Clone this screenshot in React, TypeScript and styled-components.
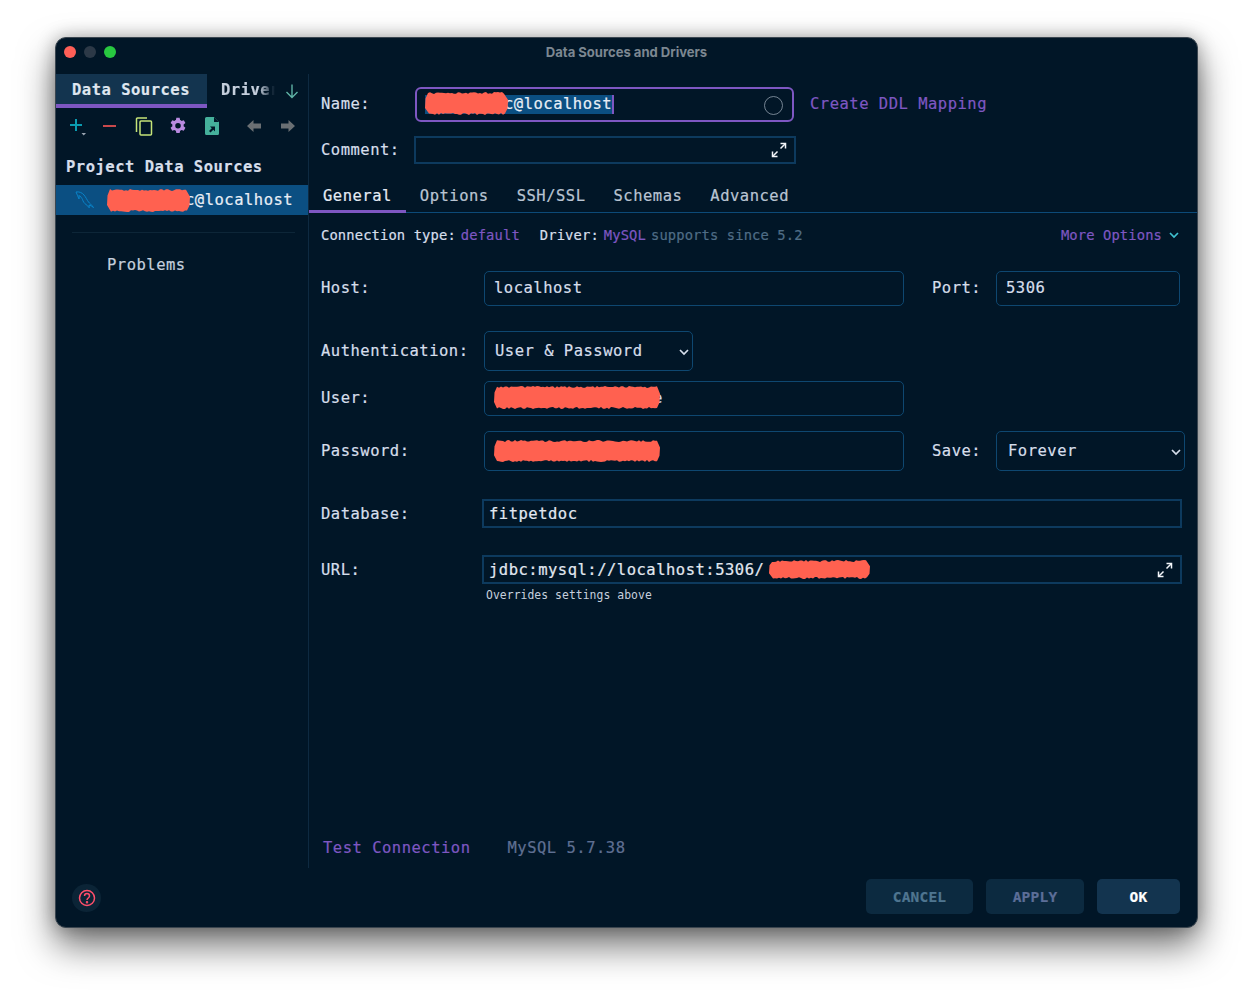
import React from "react";
import styled, { createGlobalStyle } from "styled-components";

const mono = `"DejaVu Sans Mono", "Liberation Mono", monospace`;

const Global = createGlobalStyle`
  html, body { margin: 0; padding: 0; background: #fff; }
  * { box-sizing: border-box; }
`;

const Page = styled.div`
  width: 1253px; height: 1001px; overflow: hidden;
  padding: 37px 0 0 55px;
  background: #fff;
  font-family: ${mono};
  font-size: 15.5px;
  letter-spacing: 0.5px;
  -webkit-text-stroke: 0.2px;
  color: #d6deeb;
`;
const Window = styled.div`
  width: 1143px; height: 891px;
  background: #011627;
  border: 1px solid #3b4650;
  border-radius: 11px;
  box-shadow: 0 18px 36px rgba(0,0,0,.55), 0 0 18px rgba(0,0,0,.28);
  display: flex; flex-direction: column;
  overflow: hidden;
`;
const TitleBar = styled.div`
  height: 36px; flex: none;
  display: grid; grid-template-columns: 1fr auto 1fr; align-items: center;
  padding: 0 0 8px 0;
`;
const Lights = styled.div`display: flex; gap: 8px; margin-left: 8px;`;
const Light = styled.span<{ $c: string }>`
  width: 12px; height: 12px; border-radius: 50%; background: ${p => p.$c};
`;
const Title = styled.div`
  font: 700 13.05px Inter, "Liberation Sans", sans-serif;
  letter-spacing: 0;
  -webkit-text-stroke: 0;
  margin-top: -1px;
  color: #7c8791;
`;
const Body = styled.div`display: flex; height: 794px; flex: none;`;
const Sidebar = styled.aside`
  width: 253px; flex: none; border-right: 1px solid #0e2a41;
  display: flex; flex-direction: column;
`;
const SideTabs = styled.div`display: flex; height: 34px; align-items: stretch;`;
const SideTab = styled.div`
  width: 151px; background: #13344f; border-bottom: 4px solid #7e57c2;
  padding: 7px 0 0 16px; font-weight: 700; color: #dfe6f0;
`;
const SideTabFaded = styled.div`
  width: 54px; margin-left: 14px; padding-top: 7px; overflow: hidden; white-space: nowrap;
  font-weight: 700; color: #c5cfdd;
  -webkit-mask-image: linear-gradient(90deg, #000 70%, transparent 100%);
  mask-image: linear-gradient(90deg, #000 70%, transparent 100%);
`;
const TabArrow = styled.div`margin-left: 9px; padding-top: 9px; line-height: 0;`;
const Toolbar = styled.div`
  display: flex; height: 36px; align-items: center; padding-left: 3px;
`;
const ToolBtn = styled.div<{ $gap?: number }>`
  width: 34px; height: 24px; display: flex; align-items: center; justify-content: center;
  margin-left: ${p => p.$gap ?? 0}px;
`;
const SideHeading = styled.div`
  font-weight: 700; padding-left: 10px; margin-top: 9px; height: 30px; line-height: 28px; color: #d6deeb;
`;
const SideRow = styled.div`
  height: 30px; margin-top: 2px; background: #0b4f82; display: flex; align-items: center;
  color: #e8eef6; white-space: nowrap;
`;
const RowIcon = styled.div`width: 51px; padding-left: 19px; line-height: 0;`;
const SideSep = styled.div`height: 1px; margin: 17px 13px 0 16px; background: #0d2638;`;
const Problems = styled.div`padding-left: 51px; margin-top: 22px; line-height: 20px; color: #c5cfdd;`;

const Main = styled.main`
  flex: 1; min-width: 0; display: flex; flex-direction: column;
`;
const Row = styled.div<{ $top: number; $h: number; $lift?: boolean }>`
  display: flex; align-items: center; margin-top: ${p => p.$top}px; height: ${p => p.$h}px;
  padding-left: 12px; flex: none; white-space: nowrap;
  ${p => (p.$lift ? "> * { padding-bottom: 2px; }" : "")}
`;
const Label = styled.div<{ $w: number; $ml?: number }>`
  width: ${p => p.$w}px; flex: none; margin-left: ${p => p.$ml ?? 0}px; color: #d6deeb;
`;
const NameField = styled.div`
  width: 379px; height: 100%; border: 2px solid #7e57c2; border-radius: 6px;
  display: flex; align-items: center; justify-content: space-between; padding: 0 9px 0 8px;
`;
const Selected = styled.span`
  height: 19px; padding-bottom: 2px; background: #0b4f82; border-right: 2px solid #7e57c2; display: inline-flex; align-items: center;
  color: #e8eef6;
`;
const Circle = styled.span`width: 19px; height: 19px; border-radius: 50%; border: 1px solid #9aa7b4; opacity: .75; margin-top: 2px;`;
const LinkText = styled.span<{ $ml?: number }>`color: #7e57c2; margin-left: ${p => p.$ml ?? 0}px;`;
const SquareField = styled.div<{ $w: number }>`
  width: ${p => p.$w}px; height: 100%; border: 2px solid #0d3a5e;
  display: flex; align-items: center; justify-content: space-between;
  padding: 0 7px 0 5px; color: #e2e8f1;
`;
const TabBar = styled.div`
  display: flex; height: 35px; margin-top: 14px; border-bottom: 1px solid #0c4a78; flex: none;
`;
const Tab = styled.div<{ $active?: boolean }>`
  padding: 9px 14px 0; height: 35px;
  color: ${p => (p.$active ? "#e4eaf3" : "#b9c4d2")};
  border-bottom: ${p => (p.$active ? "3px solid #7e57c2" : "none")};
  font-weight: ${p => (p.$active ? 500 : 400)};
`;
const InfoRow = styled.div`
  display: flex; align-items: center; height: 45px; margin-bottom: -1px; padding: 0 17px 2px 12px; font-size: 13.8px; letter-spacing: .12px;
  white-space: nowrap; flex: none;
`;
const InfoLabel = styled.span<{ $ml?: number }>`margin-left: ${p => p.$ml ?? 0}px; margin-right: 5px; color: #d6deeb;`;
const Dim = styled.span`color: #4f6d86; margin-left: 5px;`;
const MoreLink = styled.span`margin-left: auto; color: #7e57c2; display: inline-flex; align-items: center; gap: 6px;`;
const Field = styled.div<{ $w: number; $pl?: number }>`
  width: ${p => p.$w}px; height: 100%; flex: none; border: 1px solid #0e4770; border-radius: 5px;
  padding-left: ${p => p.$pl ?? 9}px; display: flex; align-items: center; color: #d6deeb;
`;
const SelectBox = styled(Field)`
  justify-content: space-between; padding-right: 2px; padding-left: ${p => p.$pl ?? 10}px;
  svg { margin-top: 2px; }
`;
const Ghost = styled.span`margin-left: -7px; color: #d6deeb;`;
const WideField = styled.div`
  width: 700px; height: 100%; margin-left: -2px; border: 2px solid #0d3a5e; padding: 0 7px 0 5px;
  display: flex; align-items: center; justify-content: space-between; color: #e2e8f1;
`;
const UrlText = styled.span`display: inline-flex; align-items: center;`;
const Hint = styled.div`
  padding-left: 177px; margin-top: 2px; height: 18px; line-height: 18px;
  font-size: 11.4px; letter-spacing: .05px; color: #c5cfdd; flex: none; -webkit-text-stroke: 0;
`;
const Status = styled.div`
  margin-top: auto; padding: 0 0 9px 14px; display: flex; height: 32px; align-items: center; flex: none;
`;
const Version = styled.span`margin-left: 37px; color: #5f6f92;`;
const Footer = styled.footer`
  flex: 1; display: flex; align-items: flex-start; padding: 11px 17px 0 16px;
`;
const Help = styled.div`
  width: 29px; height: 28px; margin-top: 5px; border-radius: 50%; background: #0b2436;
  display: flex; align-items: center; justify-content: center; line-height: 0;
`;
const Buttons = styled.div`margin-left: auto; display: flex; gap: 13px;`;
const Btn = styled.div<{ $w: number; $c: string; $bg: string }>`
  width: ${p => p.$w}px; height: 35px; border-radius: 5px; background: ${p => p.$bg}; color: ${p => p.$c};
  display: flex; align-items: center; justify-content: center; font-weight: 700; font-size: 14.5px; letter-spacing: .2px;
`;
const BlobSvg = styled.svg`display: block; flex: none; position: relative; z-index: 1;`;
const ScribbleWrap = styled.span<{ $mr: number; $ml: number }>`
  display: inline-flex; align-items: center; height: 0; overflow: visible;
  margin-right: ${p => p.$mr}px; margin-left: ${p => p.$ml}px;
`;

function Scribble({ w, h, seed = 3, mr = 0, ml = 0 }: { w: number; h: number; seed?: number; mr?: number; ml?: number }) {
  const d = React.useMemo(() => {
    let s = seed * 9973;
    const r = () => { s = (s * 16807) % 2147483647; return (s % 1000) / 1000; };
    const pts: string[] = [];
    for (let x = 3; x <= w - 3; x += 2) pts.push(`${x},${1 + r() * 2}`);
    pts.push(`${w},${h * 0.35}`, `${w - 0.5},${h * 0.7}`);
    for (let x = w - 3; x >= 3; x -= 2) pts.push(`${x},${h - 1 - r() * 2}`);
    pts.push(`0,${h * 0.68}`, `0.5,${h * 0.3}`);
    return `M${pts.join("L")}Z`;
  }, [w, h, seed]);
  return (
    <ScribbleWrap $mr={mr} $ml={ml}>
      <BlobSvg width={w} height={h} viewBox={`0 0 ${w} ${h}`}><path d={d} fill="#ff6150" /></BlobSvg>
    </ScribbleWrap>
  );
}

const Expand = () => (
  <svg width="16" height="16" viewBox="0 0 16 16" fill="none" stroke="#f2f5f9" strokeWidth="1.5">
    <path d="M9.5 6.5 14 2M1.8 14.2 6.5 9.5" />
    <path d="M9.5 1.6h5v5" fill="none" />
    <path d="M1.5 9.5v5h5" fill="none" />
  </svg>
);
const Chevron = ({ c = "#d6deeb", s = 12 }: { c?: string; s?: number }) => (
  <svg width={s} height={s} viewBox="0 0 12 12" fill="none" stroke={c} strokeWidth="1.7"><path d="M2 4l4 4 4-4" /></svg>
);

const Dolphin = () => (
  <svg width="19" height="18" viewBox="0 0 19 18" fill="none" stroke="#0a84c9" strokeWidth="1">
    <path d="M1 1c3-.5 6 .5 8 3 2 2.400 3 5 4.500 7 1 1.300 3 2.600 5 5.500-1.500-1.300-3-2-4.500-2.500.3 1 .4 1.800.2 2.800-1-1.500-2-2.500-3.200-3.300-2-1.300-2.800-3-3.500-5C6.800 7 5.500 5 3.800 4.500 4.500 6 4.200 7 4 8 3.300 6 2 3.500 1 1Z" />
  </svg>
);

export default function App() {
  return (
    <Page>
      <Global />
      <Window>
        <TitleBar>
          <Lights>
            <Light $c="#ff5f57" />
            <Light $c="#2c3947" />
            <Light $c="#28c840" />
          </Lights>
          <Title>Data Sources and Drivers</Title>
        </TitleBar>
        <Body>
          <Sidebar>
            <SideTabs>
              <SideTab>Data Sources</SideTab>
              <SideTabFaded>Drivers</SideTabFaded>
              <TabArrow>
                <svg width="16" height="16" viewBox="0 0 16 16" fill="none" stroke="#5fb3a5" strokeWidth="1.4">
                  <path d="M8 1.500v13M2.500 9 8 14.500 13.500 9" />
                </svg>
              </TabArrow>
            </SideTabs>
            <Toolbar>
              <ToolBtn>
                <svg width="22" height="22" viewBox="0 0 22 22">
                  <path d="M11 4v12M5 10h12" stroke="#0a9bb0" strokeWidth="2" fill="none" />
                  <path d="M16.500 18h4.500l-2.250 2.500z" fill="#9aa5b1" />
                </svg>
              </ToolBtn>
              <ToolBtn>
                <svg width="14" height="4" viewBox="0 0 14 4"><rect y="1" width="13" height="2" fill="#c9494c" /></svg>
              </ToolBtn>
              <ToolBtn>
                <svg width="18" height="20" viewBox="0 0 18 20" fill="none" stroke="#c5e478" strokeWidth="1.500">
                  <rect x="5" y="5" width="11.500" height="14" rx="1" />
                  <path d="M12 2H2.500a1 1 0 0 0-1 1v13" />
                </svg>
              </ToolBtn>
              <ToolBtn>
                <svg width="18" height="18" viewBox="0 0 24 24" fill="#b98ae0">
                  <path fillRule="evenodd" d="M14.200 1h-4.400l-.6 3.100a8 8 0 0 0-1.900 1.100L4.300 4.200 2.100 8l2.400 2.100a8 8 0 0 0 0 2.200l-2.400 2.100 2.200 3.800 3 -1a8 8 0 0 0 1.900 1.100l.6 3.100h4.400l.6-3.100a8 8 0 0 0 1.900-1.100l3 1 2.200-3.800-2.400-2.100a8 8 0 0 0 0-2.200L21.900 8l-2.200-3.800-3 1a8 8 0 0 0-1.900-1.100zM12 8a3.700 3.700 0 1 1 0 7.400A3.700 3.700 0 0 1 12 8z" />
                </svg>
              </ToolBtn>
              <ToolBtn>
                <svg width="14" height="18" viewBox="0 0 14 18">
                  <path d="M1.500 0H9l5 5v11.500a1.500 1.500 0 0 1-1.500 1.500h-11A1.500 1.500 0 0 1 0 16.500v-15A1.500 1.500 0 0 1 1.500 0Z" fill="#45b09b" />
                  <path d="M9 0v5h5" fill="#011627" />
                  <path d="M5 9.500h5v5L8.300 12.800 5.500 15.500 4 14l2.800-2.800z" fill="#011627" />
                </svg>
              </ToolBtn>
              <ToolBtn $gap={8}>
                <svg width="14" height="12" viewBox="0 0 14 12"><path d="M6.500 0v3.500H14v5H6.500V12L0 6z" fill="#6a6f73" /></svg>
              </ToolBtn>
              <ToolBtn>
                <svg width="14" height="12" viewBox="0 0 14 12"><path d="M7.500 0v3.500H0v5h7.500V12L14 6z" fill="#6a6f73" /></svg>
              </ToolBtn>
            </Toolbar>
            <SideHeading>Project Data Sources</SideHeading>
            <SideRow>
              <RowIcon><Dolphin /></RowIcon>
              <Scribble w={83} h={25} seed={5} mr={-5} />
              <span>c@localhost</span>
            </SideRow>
            <SideSep />
            <Problems>Problems</Problems>
          </Sidebar>
          <Main>
            <Row $top={13} $h={35} $lift>
              <Label $w={94}>Name:</Label>
              <NameField>
                <Selected><Scribble w={83} h={25} seed={7} mr={-4} />c@localhost</Selected>
                <Circle />
              </NameField>
              <LinkText $ml={16}>Create DDL Mapping</LinkText>
            </Row>
            <Row $top={14} $h={28}>
              <Label $w={93}>Comment:</Label>
              <SquareField $w={382}><span /><Expand /></SquareField>
            </Row>
            <TabBar>
              <Tab $active>General</Tab>
              <Tab>Options</Tab>
              <Tab>SSH/SSL</Tab>
              <Tab>Schemas</Tab>
              <Tab>Advanced</Tab>
            </TabBar>
            <InfoRow>
              <InfoLabel>Connection type:</InfoLabel>
              <LinkText>default</LinkText>
              <InfoLabel $ml={20}>Driver:</InfoLabel>
              <LinkText>MySQL</LinkText>
              <Dim>supports since 5.2</Dim>
              <MoreLink>More Options <Chevron c="#3fc1d0" /></MoreLink>
            </InfoRow>
            <Row $top={14} $h={35} $lift>
              <Label $w={163}>Host:</Label>
              <Field $w={420}>localhost</Field>
              <Label $w={64} $ml={28}>Port:</Label>
              <Field $w={184}>5306</Field>
            </Row>
            <Row $top={25} $h={40}>
              <Label $w={163}>Authentication:</Label>
              <SelectBox as="div" $w={209}>User &amp; Password<Chevron /></SelectBox>
            </Row>
            <Row $top={10} $h={35} $lift>
              <Label $w={163}>User:</Label>
              <Field $w={420}><Scribble w={166} h={25} seed={11} /><Ghost>e</Ghost></Field>
            </Row>
            <Row $top={15} $h={40}>
              <Label $w={163}>Password:</Label>
              <Field $w={420}><Scribble w={166} h={24} seed={13} /></Field>
              <Label $w={64} $ml={28}>Save:</Label>
              <SelectBox as="div" $w={189} $pl={11}>Forever<Chevron /></SelectBox>
            </Row>
            <Row $top={28} $h={29}>
              <Label $w={163}>Database:</Label>
              <WideField>fitpetdoc</WideField>
            </Row>
            <Row $top={27} $h={29}>
              <Label $w={163}>URL:</Label>
              <WideField>
                <UrlText>jdbc:mysql://localhost:5306/<Scribble w={101} h={21} seed={17} ml={5} /></UrlText>
                <Expand />
              </WideField>
            </Row>
            <Hint>Overrides settings above</Hint>
            <Status>
              <LinkText>Test Connection</LinkText>
              <Version>MySQL 5.7.38</Version>
            </Status>
          </Main>
        </Body>
        <Footer>
          <Help>
            <svg width="18" height="18" viewBox="0 0 18 18" fill="none" stroke="#ff4f6b" strokeWidth="1.500">
              <circle cx="9" cy="9" r="7.500" />
              <path d="M6.500 7c0-3.200 5-3.200 5 0 0 2-2.500 2-2.500 4" />
              <circle cx="9" cy="13.300" r=".5" fill="#ff4f6b" />
            </svg>
          </Help>
          <Buttons>
            <Btn $w={107} $bg="#0c2a40" $c="#4f7590">CANCEL</Btn>
            <Btn $w={98} $bg="#0c2a40" $c="#5c6e98">APPLY</Btn>
            <Btn $w={83} $bg="#13344f" $c="#ffffff">OK</Btn>
          </Buttons>
        </Footer>
      </Window>
    </Page>
  );
}
